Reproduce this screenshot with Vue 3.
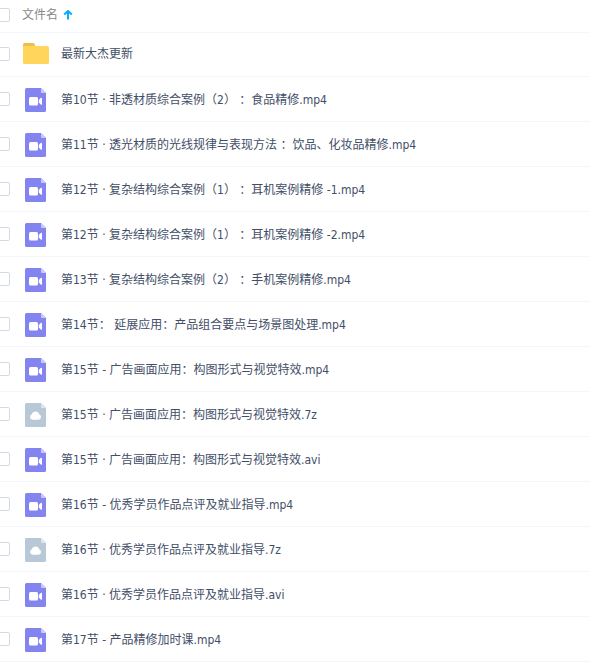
<template>
  <div class="file-list">
    <table class="file-table">
      <thead>
        <tr>
          <th class="check-col">
            <input v-model="allChecked" type="checkbox" class="check" aria-label="全选">
          </th>
          <th>
            <button class="sort-btn" @click="toggleSort">
              文件名
              <svg class="sort-icon" :class="{ desc: !ascending }" viewBox="0 0 10 10">
                <path d="M5 9.500V1.500M1.200 4.500L5 1L8.800 4.500" />
              </svg>
            </button>
          </th>
        </tr>
      </thead>
      <tbody>
        <tr v-for="file in sortedFiles" :key="file.id" :class="file.type">
          <td class="check-col">
            <input
              :id="'file-' + file.id"
              v-model="checked"
              type="checkbox"
              class="check"
              :value="file.id"
            >
          </td>
          <td class="name-col">
            <label class="file-name" :for="'file-' + file.id">
              <svg v-if="file.type === 'folder'" class="file-icon" viewBox="0 0 26 24">
                <path fill="#ecbe4b" d="M0 5V2.500Q0 1 1.500 1H10Q11 1 11.500 2L12.500 5Z" />
                <path fill="#ffd55c" d="M0 4H24.500Q26 4 26 5.500V20.500Q26 22 24.500 22H1.500Q0 22 0 20.500Z" />
              </svg>
              <svg v-else class="file-icon" viewBox="0 0 26 24">
                <path
                  :fill="file.type === 'video' ? '#8484f1' : '#b8c8d6'"
                  d="M3.500 0H18L23 5V22.500Q23 24 21.500 24H3.500Q2 24 2 22.500V1.500Q2 0 3.500 0Z"
                />
                <path :fill="file.type === 'video' ? '#c9c9fb' : '#dce5ec'" d="M18 0L23 5H19Q18 5 18 4Z" />
                <g v-if="file.type === 'video'" fill="#fff">
                  <rect x="6" y="9" width="9" height="8.500" rx="1.500" />
                  <path d="M15.800 12L18 9.800Q19 9.300 19 10.300V16.200Q19 17.200 18 16.700L15.800 14.500Z" />
                </g>
                <path
                  v-else
                  fill="#fff"
                  d="M9.700 16.800A2.900 2.900 0 0 1 8.900 11.200A3.800 3.800 0 0 1 16.200 11.200A2.900 2.900 0 0 1 15.400 16.800Z"
                />
              </svg>
              <span>{{ file.name }}</span>
            </label>
          </td>
        </tr>
      </tbody>
    </table>
  </div>
</template>

<script setup>
import { ref, computed } from 'vue'

// 文件数据
const files = ref([
  { id: 1, type: 'folder', name: '最新大杰更新' },
  { id: 2, type: 'video', name: '第10节 · 非透材质综合案例（2） ：食品精修.mp4' },
  { id: 3, type: 'video', name: '第11节 · 透光材质的光线规律与表现方法 ：饮品、化妆品精修.mp4' },
  { id: 4, type: 'video', name: '第12节 · 复杂结构综合案例（1） ：耳机案例精修 -1.mp4' },
  { id: 5, type: 'video', name: '第12节 · 复杂结构综合案例（1） ：耳机案例精修 -2.mp4' },
  { id: 6, type: 'video', name: '第13节 · 复杂结构综合案例（2） ：手机案例精修.mp4' },
  { id: 7, type: 'video', name: '第14节： 延展应用：产品组合要点与场景图处理.mp4' },
  { id: 8, type: 'video', name: '第15节 - 广告画面应用：构图形式与视觉特效.mp4' },
  { id: 9, type: 'archive', name: '第15节 · 广告画面应用：构图形式与视觉特效.7z' },
  { id: 10, type: 'video', name: '第15节 · 广告画面应用：构图形式与视觉特效.avi' },
  { id: 11, type: 'video', name: '第16节 - 优秀学员作品点评及就业指导.mp4' },
  { id: 12, type: 'archive', name: '第16节 · 优秀学员作品点评及就业指导.7z' },
  { id: 13, type: 'video', name: '第16节 · 优秀学员作品点评及就业指导.avi' },
  { id: 14, type: 'video', name: '第17节 - 产品精修加时课.mp4' }
])

const ascending = ref(true)
const checked = ref([])

const sortedFiles = computed(() => {
  return ascending.value ? files.value : [...files.value].reverse()
})

// 全选
const allChecked = computed({
  get: () => checked.value.length === files.value.length,
  set: (value) => {
    checked.value = value ? files.value.map(file => file.id) : []
  }
})

const toggleSort = () => {
  ascending.value = !ascending.value
}
</script>

<style>
body {
  background: #fff;
}
</style>

<style scoped>
.file-list {
  overflow: hidden;
  font-family: "DejaVu Sans Condensed", "Noto Sans CJK SC", sans-serif;
  font-size: 12px;
  line-height: 18px;
  color: #424e67;
}

.file-table {
  width: 100%;
  border-collapse: separate;
  border-spacing: 0;
}

th,
td {
  box-sizing: border-box;
  height: 45px;
  padding: 0;
  border-bottom: 1px solid #f2f6fd;
  text-align: left;
  vertical-align: middle;
}

th {
  height: 33px;
  padding-bottom: 2px;
  font-weight: normal;
}

.name-col {
  padding: 2px 0 0 1px;
}

.folder td {
  height: 44px;
  padding-top: 0;
  padding-bottom: 1px;
}

.check-col {
  width: 22px;
}

.check {
  display: block;
  appearance: none;
  box-sizing: border-box;
  width: 14px;
  height: 14px;
  margin: 0 0 0 -4px;
  border: 1px solid #d3dae5;
  border-radius: 2px;
  background: #fff;
  cursor: pointer;
}

.check:checked {
  border-color: #09aaff;
  background: #09aaff;
}

.sort-btn {
  display: flex;
  align-items: center;
  gap: 5px;
  padding: 0;
  border: none;
  background: none;
  font: inherit;
  color: #888;
  cursor: pointer;
}

.sort-icon {
  width: 10px;
  height: 10px;
  fill: none;
  stroke: #09aaff;
  stroke-width: 2;
}

.sort-icon.desc {
  transform: rotate(180deg);
}

.file-name {
  display: flex;
  align-items: center;
  gap: 12px;
  cursor: pointer;
}

.file-icon {
  flex: none;
  width: 26px;
  height: 24px;
}

tbody tr:hover {
  background: #f7fbff;
}
</style>
